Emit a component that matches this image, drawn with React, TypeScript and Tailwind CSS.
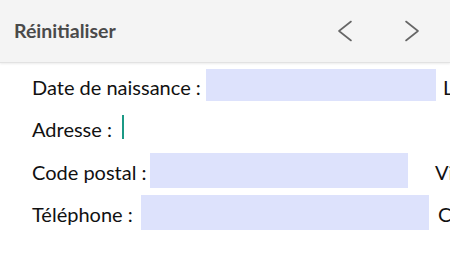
import React from 'react';

const font = { fontFamily: 'Lato, "Noto Sans", sans-serif' };

function Chevron({ dir }: { dir: 'left' | 'right' }) {
    return (
        <svg width="16" height="22" viewBox="0 0 16 22" fill="none" stroke="#666" strokeWidth="1.6" strokeLinecap="round" strokeLinejoin="round">
            {dir === 'left' ? <path d="M14 1.5 L2 11 L14 20.5" /> : <path d="M2 1.5 L14 11 L2 20.5" />}
        </svg>
    );
}

export default function App() {
    return (
        <div className="w-[450px] h-[253px] bg-white overflow-hidden" style={font}>
            {/* TOOLBAR */}
            <div className="h-[63px] bg-[#f4f4f4] border-b border-[#e2e2e2] shadow-[0_1px_2px_rgba(0,0,0,0.08)] flex items-center pl-[14px]">
                <span className="text-[19.5px] font-bold text-[#4a4a4a]">Réinitialiser</span>
                <div className="ml-auto flex items-center gap-[51px] mr-[30px]">
                    <Chevron dir="left" />
                    <Chevron dir="right" />
                </div>
            </div>

            {/* FORM */}
            <div className="pl-[32px] text-[20px] text-[#111] whitespace-nowrap">
                <div className="flex items-center mt-[6px] h-[32px]">
                    <span className="w-[174px] shrink-0 pt-[4px]">Date de naissance :</span>
                    <div className="w-[230px] h-[32px] bg-[#dde2fc] shrink-0" />
                    <span className="ml-[7px] pt-[4px]">Lieu</span>
                </div>
                <div className="flex items-center mt-[14px] h-[24px]">
                    <span className="w-[90px] shrink-0 pt-[4px]">Adresse :</span>
                    <div className="w-[2px] h-[24px] bg-[#1b9985]" />
                </div>
                <div className="flex items-center mt-[14px] h-[35px]">
                    <span className="w-[118px] shrink-0 pt-[2px]">Code postal :</span>
                    <div className="w-[258px] h-[35px] bg-[#dde2fc] shrink-0" />
                    <span className="ml-[27px] pt-[2px]">Ville</span>
                </div>
                <div className="flex items-center mt-[7px] h-[35px]">
                    <span className="w-[109px] shrink-0 pt-[2px]">Téléphone :</span>
                    <div className="w-[288px] h-[35px] bg-[#dde2fc] shrink-0" />
                    <span className="ml-[9px] pt-[2px]">Courriel</span>
                </div>
            </div>
        </div>
    );
}
